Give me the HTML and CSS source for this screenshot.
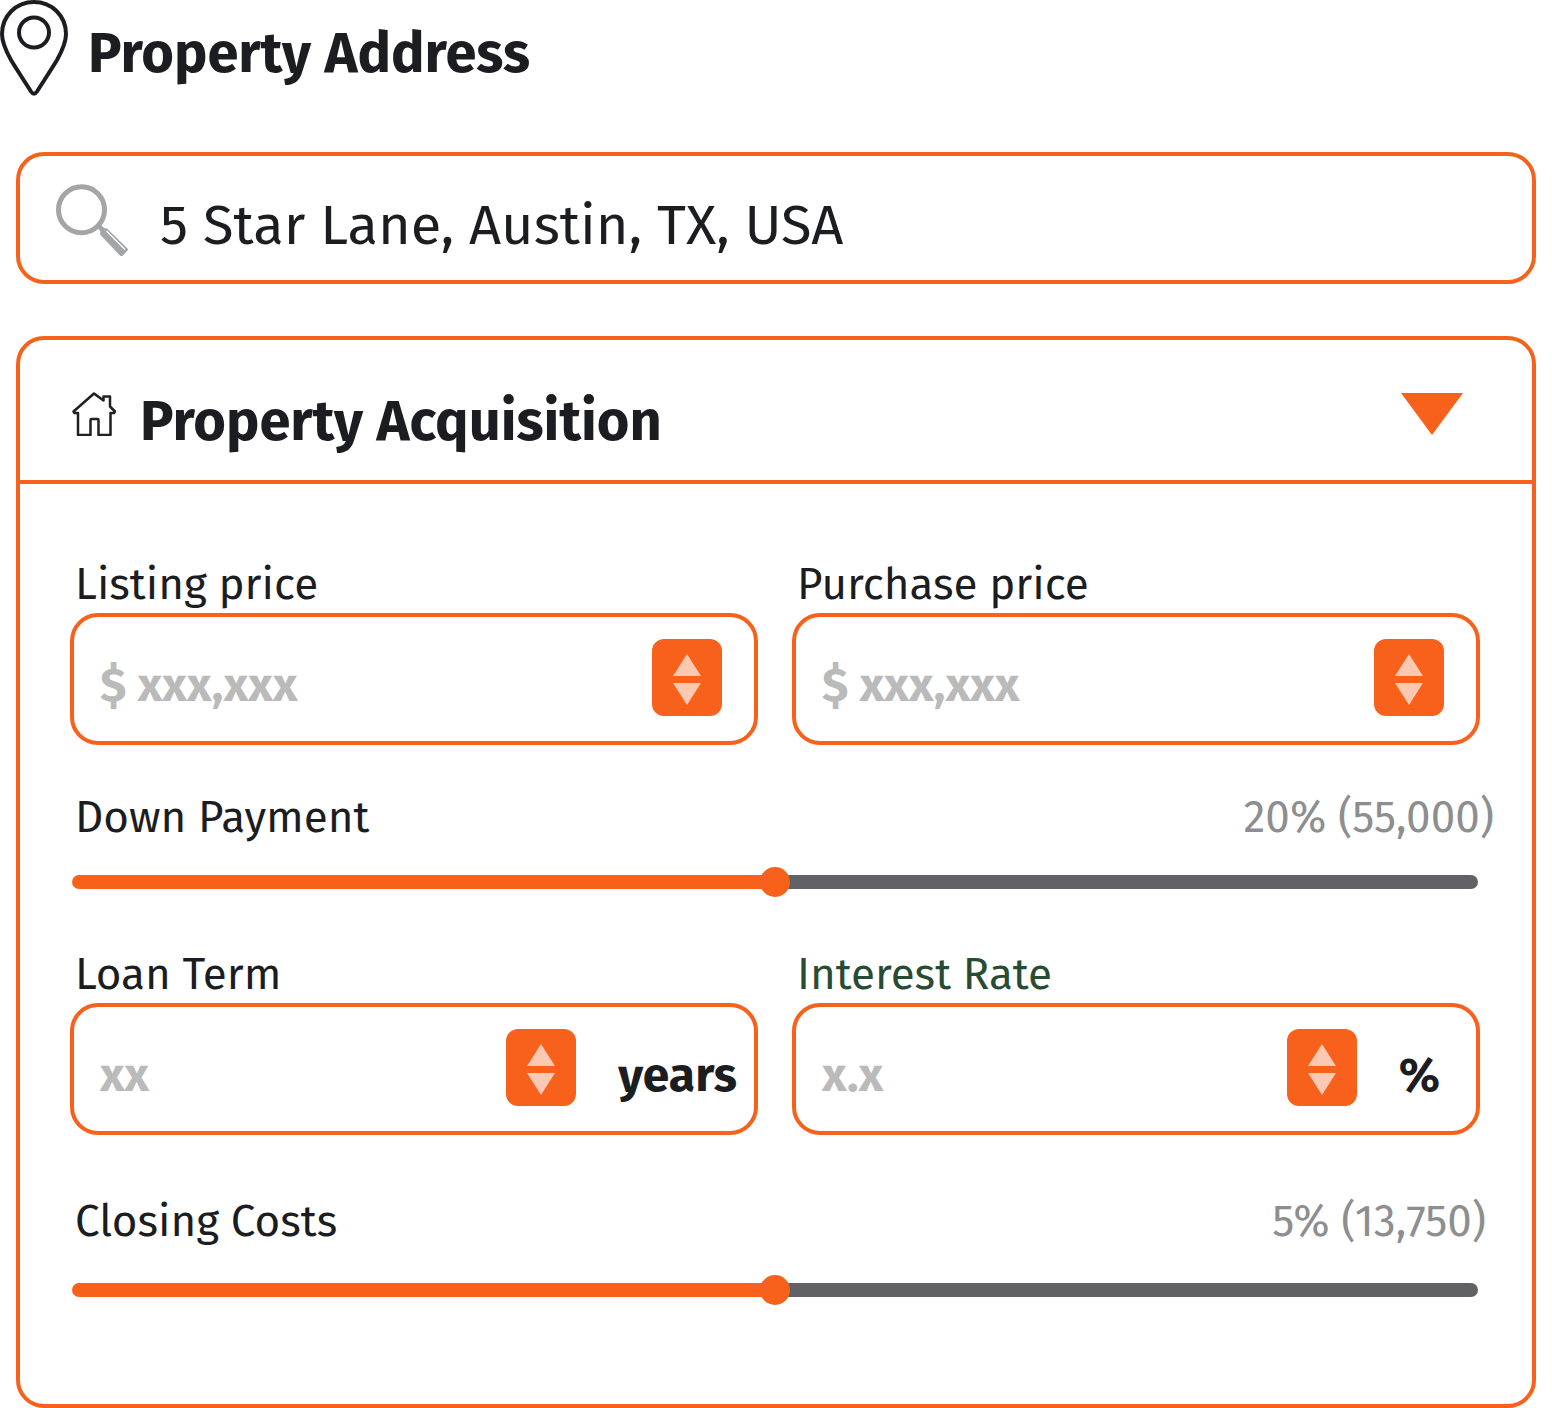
FILE: index.html
```html
<!DOCTYPE html>
<html lang="en">

<head>
  <meta charset="UTF-8">
  <meta name="viewport" content="width=device-width, initial-scale=1.0">
  <title>Property Calculator</title>
  <link rel="stylesheet" href="styles.css">
</head>

<body>

  <header class="page-header">
    <svg class="pin-icon" viewBox="0 0 68 96" aria-hidden="true">
      <path d="M34 2C16 2 2 16 2 34C2 43 6 51 11 60C17 70 25 82 31 91.500Q34 96 37 91.500C43 82 51 70 57 60C62 51 66 43 66 34C66 16 52 2 34 2Z" />
      <circle cx="34" cy="32.500" r="15" />
    </svg>
    <h1><label for="address">Property Address</label></h1>
  </header>

  <div class="search-box">
    <svg class="search-icon" viewBox="0 0 72 72" aria-hidden="true">
      <circle cx="25.500" cy="25.700" r="23" fill="none" stroke="#a3a5a6" stroke-width="5" />
      <path d="M41 43L44 40L48 44L51 44.500L71 64Q73 65.500 71 67L67 71.500Q65.500 73 64 71.500L45 51.500Q43.500 50 44.500 47.500Z" fill="#a3a5a6" />
      <path d="M50.500 47L69 65.500" stroke="#fff" stroke-width="1.200" />
    </svg>
    <input type="text" id="address" value="5 Star Lane, Austin, TX, USA">
  </div>

  <section class="card">
    <div class="card-header">
      <svg class="house-icon" viewBox="0 0 44 44" aria-hidden="true">
        <path d="M22 1.500L1.500 19.500L2.500 21H6V43H18.500V28Q18.500 27 19.500 27H25.500Q26.500 27 26.500 28V43H38.500V21H42L43 19.500L38 14.500V4.500H31.500V8.500Z" />
      </svg>
      <h2>Property Acquisition</h2>
      <button type="button" class="toggle" aria-label="Collapse section">
        <svg viewBox="0 0 62 42"><path d="M0 0H62L31 42Z" /></svg>
      </button>
    </div>

    <form class="card-body">
      <div class="row">
        <div class="field">
          <label for="listing">Listing price</label>
          <div class="field-box">
            <input type="text" id="listing" inputmode="numeric" placeholder="$ xxx,xxx">
            <div class="stepper">
              <button type="button" aria-label="Increase"><svg viewBox="0 0 28 22"><path d="M14 0L28 22H0Z" /></svg></button>
              <button type="button" aria-label="Decrease"><svg viewBox="0 0 28 22"><path d="M0 0H28L14 22Z" /></svg></button>
            </div>
          </div>
        </div>
        <div class="field">
          <label for="purchase">Purchase price</label>
          <div class="field-box">
            <input type="text" id="purchase" inputmode="numeric" placeholder="$ xxx,xxx">
            <div class="stepper">
              <button type="button" aria-label="Increase"><svg viewBox="0 0 28 22"><path d="M14 0L28 22H0Z" /></svg></button>
              <button type="button" aria-label="Decrease"><svg viewBox="0 0 28 22"><path d="M0 0H28L14 22Z" /></svg></button>
            </div>
          </div>
        </div>
      </div>

      <div class="slider">
        <div class="slider-head">
          <label for="down">Down Payment</label>
          <output for="down">20% (55,000)</output>
        </div>
        <input type="range" id="down" min="0" max="100" value="50">
      </div>

      <div class="row">
        <div class="field">
          <label for="term">Loan Term</label>
          <div class="field-box with-years">
            <input type="text" id="term" inputmode="numeric" placeholder="xx">
            <div class="stepper">
              <button type="button" aria-label="Increase"><svg viewBox="0 0 28 22"><path d="M14 0L28 22H0Z" /></svg></button>
              <button type="button" aria-label="Decrease"><svg viewBox="0 0 28 22"><path d="M0 0H28L14 22Z" /></svg></button>
            </div>
            <span class="unit">years</span>
          </div>
        </div>
        <div class="field">
          <label for="rate" class="green">Interest Rate</label>
          <div class="field-box with-percent">
            <input type="text" id="rate" inputmode="decimal" placeholder="x.x">
            <div class="stepper">
              <button type="button" aria-label="Increase"><svg viewBox="0 0 28 22"><path d="M14 0L28 22H0Z" /></svg></button>
              <button type="button" aria-label="Decrease"><svg viewBox="0 0 28 22"><path d="M0 0H28L14 22Z" /></svg></button>
            </div>
            <span class="unit">%</span>
          </div>
        </div>
      </div>

      <div class="slider slider-last">
        <div class="slider-head">
          <label for="closing">Closing Costs</label>
          <output for="closing">5% (13,750)</output>
        </div>
        <input type="range" id="closing" min="0" max="100" value="50">
      </div>
    </form>
  </section>

</body>

</html>
```

FILE: styles.css
```css
* {
  box-sizing: border-box;
}

body {
  margin: 0;
  background-color: #fff;
  color: #1c1d21;
  font-family: 'Fira Sans', 'Noto Sans', sans-serif;
}

h1, h2 {
  margin: 0;
  font-size: 56px;
  line-height: 64px;
  font-weight: 700;
}

input {
  min-width: 0;
  padding: 0;
  border: none;
  outline: none;
  background: none;
  color: inherit;
  font-family: inherit;
}

button {
  padding: 0;
  border: none;
  background: none;
  cursor: pointer;
}

svg {
  display: block;
  flex: none;
}

.page-header {
  display: flex;
  align-items: center;
  gap: 20px;
  height: 96px;
}

.page-header h1 {
  padding-top: 12px;
}

.pin-icon {
  width: 68px;
  height: 96px;
  fill: none;
  stroke: #1c1d21;
  stroke-width: 4;
}

.search-box {
  display: flex;
  align-items: center;
  gap: 32px;
  height: 132px;
  margin: 56px 16px 52px;
  padding: 4px 36px 0;
  border: 4px solid #f8611b;
  border-radius: 28px;
}

.search-icon {
  width: 72px;
  height: 72px;
}

.search-box input {
  flex: 1;
  height: 100%;
  padding-top: 10px;
  font-size: 56px;
}

.card {
  margin: 0 16px;
  border: 4px solid #f8611b;
  border-radius: 28px;
}

.card-header {
  display: flex;
  align-items: center;
  gap: 24px;
  height: 144px;
  padding: 8px 69px 0 52px;
  border-bottom: 4px solid #f8611b;
}

.card-header h2 {
  flex: 1;
  padding-top: 16px;
}

.house-icon {
  width: 44px;
  height: 44px;
  fill: none;
  stroke: #221f20;
  stroke-width: 2.5;
  stroke-linejoin: round;
}

.toggle svg {
  width: 62px;
  height: 42px;
  fill: #f8611b;
}

.card-body {
  padding: 72px 52px 50px 50px;
}

.row {
  display: grid;
  grid-template-columns: 1fr 1fr;
  gap: 34px;
}

label {
  display: block;
}

.field {
  min-width: 0;
}

.field label,
.slider-head {
  padding-left: 5px;
  font-size: 44px;
  line-height: 57px;
}

.field .green {
  color: #284c33;
}

.field-box {
  display: flex;
  align-items: center;
  height: 132px;
  padding: 0 32px 0 26px;
  border: 4px solid #f8611b;
  border-radius: 28px;
}

.field-box.with-years {
  padding-right: 17px;
}

.field-box.with-percent {
  padding-right: 36px;
}

.field-box input {
  flex: 1;
  height: 100%;
  padding-top: 12px;
  font-size: 48px;
  font-weight: 700;
}

.field-box input::placeholder {
  color: #bababa;
  opacity: 1;
}

.stepper {
  display: flex;
  flex: none;
  flex-direction: column;
  align-items: center;
  gap: 7px;
  width: 70px;
  margin-bottom: 4px;
  padding: 15px 0 11px;
  border-radius: 12px;
  background-color: #f8611b;
}

.stepper svg {
  width: 28px;
  height: 22px;
  fill: #fdc8b1;
}

.unit {
  margin-left: 42px;
  padding-top: 12px;
  font-size: 48px;
  font-weight: 700;
}

.slider {
  padding: 44px 0 49px;
}

.slider-head {
  display: flex;
  justify-content: space-between;
  margin: 0 -14px 21px 0;
}

.slider-head output {
  color: #8d8e8f;
}

.slider input {
  display: block;
  width: calc(100% - 4px);
  height: 30px;
  margin: 0 2px;
  appearance: none;
}

.slider input::-webkit-slider-runnable-track {
  height: 14px;
  border-radius: 7px;
  background: linear-gradient(to right, #f8611b 50%, #616266 50%);
}

.slider input::-webkit-slider-thumb {
  width: 30px;
  height: 30px;
  margin-top: -8px;
  border-radius: 50%;
  background-color: #f8611b;
  appearance: none;
}

.slider-last {
  padding-top: 58px;
}

.slider-last .slider-head {
  margin: 0 -6px 25px 0;
}
```
